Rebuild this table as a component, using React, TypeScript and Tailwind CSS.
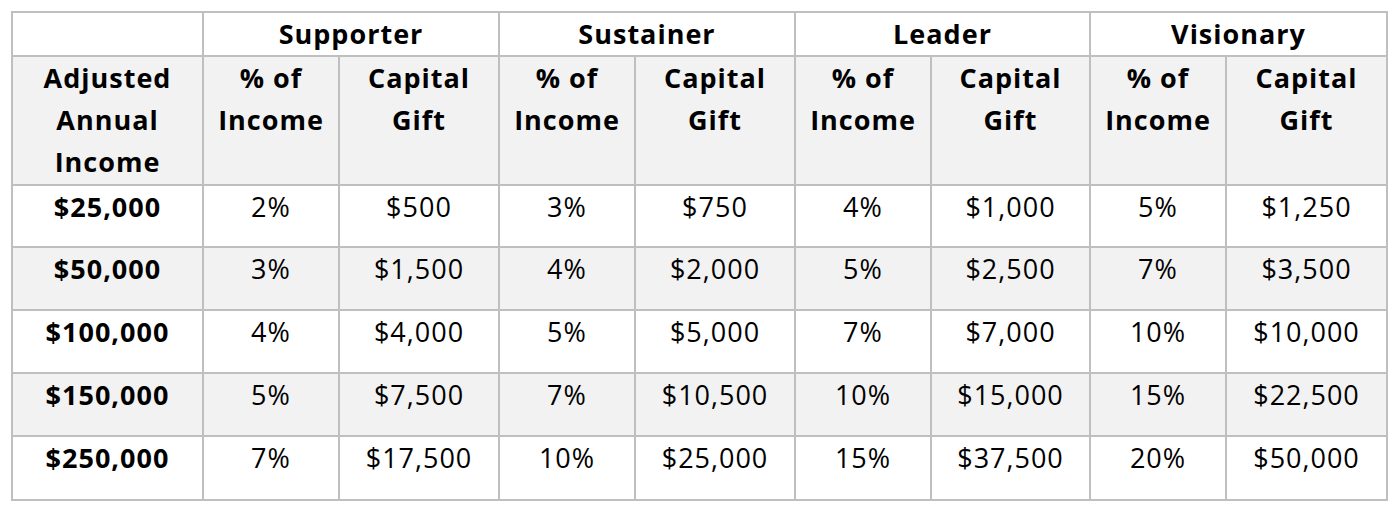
type Row = {
  income: string;
  cells: [string, string][];
};

const tiers = ["Supporter", "Sustainer", "Leader", "Visionary"];

const rows: Row[] = [
  { income: "$25,000", cells: [["2%", "$500"], ["3%", "$750"], ["4%", "$1,000"], ["5%", "$1,250"]] },
  { income: "$50,000", cells: [["3%", "$1,500"], ["4%", "$2,000"], ["5%", "$2,500"], ["7%", "$3,500"]] },
  { income: "$100,000", cells: [["4%", "$4,000"], ["5%", "$5,000"], ["7%", "$7,000"], ["10%", "$10,000"]] },
  { income: "$150,000", cells: [["5%", "$7,500"], ["7%", "$10,500"], ["10%", "$15,000"], ["15%", "$22,500"]] },
  { income: "$250,000", cells: [["7%", "$17,500"], ["10%", "$25,000"], ["15%", "$37,500"], ["20%", "$50,000"]] },
];

const rowHeights = ["h-[62px]", "h-[63px]", "h-[63px]", "h-[63px]", "h-[64px]"];

const cell = "border-r-2 border-b-2 border-[#bfbfbf] text-center leading-[42px]";

export default function App() {
  return (
    <div className="min-h-screen bg-white pt-[11px] pl-[11px] font-['Open_Sans','Lato',sans-serif] text-[27px] tracking-[1px] text-black">
      <div className="grid w-fit grid-cols-[191px_136px_160px_136px_160px_136px_159px_136px_161px] border-t-2 border-l-2 border-[#bfbfbf]">
        {/* tier row */}
        <div className={`${cell} h-[44px] bg-white`} />
        {tiers.map((t) => (
          <div key={t} className={`${cell} col-span-2 h-[44px] bg-white font-bold`}>
            {t}
          </div>
        ))}

        {/* column headings */}
        <div className={`${cell} h-[129px] bg-[#f2f2f2] font-bold`}>
          Adjusted
          <br />
          Annual
          <br />
          Income
        </div>
        {tiers.map((t) => (
          <div key={t} className="contents">
            <div className={`${cell} h-[129px] bg-[#f2f2f2] font-bold`}>
              % of
              <br />
              Income
            </div>
            <div className={`${cell} h-[129px] bg-[#f2f2f2] font-bold`}>
              Capital
              <br />
              Gift
            </div>
          </div>
        ))}

        {/* data */}
        {rows.map((r, i) => {
          const bg = i % 2 === 1 ? "bg-[#f2f2f2]" : "bg-white";
          return (
            <div key={r.income} className="contents">
              <div className={`${cell} ${rowHeights[i]} ${bg} font-bold`}>{r.income}</div>
              {r.cells.map(([pct, gift], j) => (
                <div key={j} className="contents">
                  <div className={`${cell} ${rowHeights[i]} ${bg}`}>{pct}</div>
                  <div className={`${cell} ${rowHeights[i]} ${bg}`}>{gift}</div>
                </div>
              ))}
            </div>
          );
        })}
      </div>
    </div>
  );
}
